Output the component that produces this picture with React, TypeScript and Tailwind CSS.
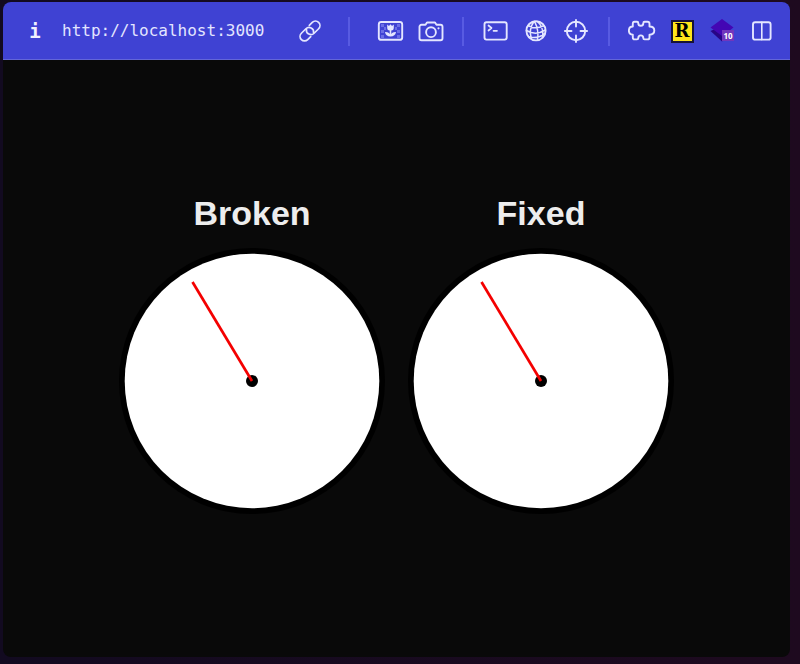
import type { ReactNode } from "react";

function Icon({ children }: { children: ReactNode }) {
  return (
    <svg
      viewBox="0 0 28 28"
      className="size-7"
      fill="none"
      stroke="#e4e6ff"
      strokeWidth="1.9"
      strokeLinecap="round"
      strokeLinejoin="round"
      aria-hidden="true"
    >
      {children}
    </svg>
  );
}

function ToolButton({ label, children }: { label: string; children: ReactNode }) {
  return (
    <button type="button" aria-label={label} className="flex w-10 shrink-0 items-center justify-center">
      <Icon>{children}</Icon>
    </button>
  );
}

function Divider({ className = "mx-3" }: { className?: string }) {
  return <span className={`h-[29px] w-0.5 shrink-0 bg-[#585be2] ${className}`} />;
}

function Toolbar() {
  return (
    <header className="flex h-[58px] items-center border-b border-[#6366d8] bg-[#3f42d3] pt-px pr-2 pl-[25px]">
      <button
        type="button"
        aria-label="Site information"
        className="flex w-[14px] shrink-0 items-center justify-center font-['DejaVu_Sans_Mono',monospace] text-[19px] leading-7 font-bold text-[#f0f1ff]"
      >
        i
      </button>
      <input
        type="text"
        aria-label="Address"
        defaultValue="http://localhost:3000"
        className="ml-5 min-w-0 flex-1 bg-transparent font-['DejaVu_Sans_Mono',monospace] text-[16px] leading-7 text-[#e4e6ff] outline-none"
      />
      <ToolButton label="Copy link">
        <g transform="rotate(-45 14 14)" strokeWidth="1.7">
          <path d="M10.500 18.500H6.300a4.500 4.500 0 0 1 0-9h6.400a4.500 4.500 0 0 1 2.600 8.200" />
          <path d="M17.500 9.500h4.200a4.500 4.500 0 0 1 0 9h-6.400a4.500 4.500 0 0 1-2.600-8.200" />
        </g>
      </ToolButton>
      <Divider className="mr-5 ml-[18px]" />
      <ToolButton label="Image">
        <rect x="2.800" y="5" width="23.400" height="17.800" rx="2.400" />
        <path
          d="M5 7h3v3H5zM8 10h2v3H8zM5 13h3v3H5zM5 18h3v3H5zM21 7h3v3h-3zM19 10h2v3h-2zM21 13h3v3h-3zM21 18h3v3h-3z"
          fill="#6b6ee6"
          stroke="none"
        />
        <path
          d="M11.200 7.500l1.800 1.500 1.500-1.800L16 9l1.800-1.500v3.700a2.500 2.500 0 0 1-2.500 2.400v3.500c.8-1.500 2.500-2.200 4.700-2-.4 3-2.400 4.400-5.500 4.400S9.400 18.100 9 15.100c2.200-.2 3.900.5 4.700 2v-3.500a2.500 2.500 0 0 1-2.500-2.400z"
          fill="#e4e6ff"
          stroke="none"
        />
      </ToolButton>
      <ToolButton label="Screenshot">
        <path d="M5.500 7.800h4l1.500-2.300h8l1.500 2.300h4a2 2 0 0 1 2 2v11.400a2 2 0 0 1-2 2h-19a2 2 0 0 1-2-2V9.800a2 2 0 0 1 2-2z" />
        <circle cx="15" cy="15.200" r="4.900" />
        <circle cx="22.500" cy="11.300" r="1.100" fill="#e4e6ff" stroke="none" />
      </ToolButton>
      <Divider />
      <ToolButton label="Console">
        <rect x="2.500" y="5.200" width="22.200" height="17.400" rx="2" />
        <path d="M6.500 8.500l3 2.500-3 2.500M11.500 13.800h3.500" strokeWidth="1.700" />
      </ToolButton>
      <ToolButton label="Network">
        <circle cx="14" cy="13.800" r="9.600" />
        <path
          d="M12 4.500C8 10 7.500 16 9.500 22M12.500 4.400C15.500 10 16.500 17 15.500 23M15.500 4.500C20 8.500 21.500 14 20.500 20.500M6 8.500c5 3 10.500 3 16 .2M4.500 13.500c6 3.600 13 3.200 18.800-.5M6.500 19.800c6 1.300 12 .3 16.300-3.200"
          strokeWidth="1.500"
        />
      </ToolButton>
      <ToolButton label="Select element">
        <circle cx="14" cy="14" r="9.200" />
        <path d="M14 2.900v6.600M14 18.500v6.600M2.900 14h6.600M18.500 14h6.600" />
      </ToolButton>
      <Divider />
      <ToolButton label="Extensions">
        <path d="M6.500 4.800H9Q10.300 4.800 10.300 6.200Q10.300 8.800 12.800 8.800Q15.300 8.800 15.300 6.200Q15.300 4.800 16.600 4.800H19.500Q21.500 4.800 21.500 6.800V9.500Q26.300 9.500 26.300 13.600Q26.300 17.700 21.500 17.700V20.400Q21.500 22.400 19.500 22.400H16.600Q15.300 22.400 15.300 21Q15.300 18.400 12.800 18.400Q10.300 18.400 10.300 21Q10.300 22.400 9 22.400H6.500Q4.800 22.400 4.800 20.400V17.700Q.900 17.700 .900 13.600Q.900 9.500 4.800 9.500V6.800Q4.800 4.800 6.500 4.800Z" />
      </ToolButton>
      <button
        type="button"
        aria-label="R extension"
        className="flex w-10 shrink-0 items-center justify-center"
      >
        <span className="flex size-[23px] items-center justify-center border-2 border-[#171238] bg-[#ffe51b] font-['DejaVu_Serif',serif] text-[18px] leading-none font-black text-black">
          R
        </span>
      </button>
      <button
        type="button"
        aria-label="Layers extension, 10 items"
        className="relative flex w-10 shrink-0 items-center justify-center"
      >
        <svg viewBox="0 0 28 28" className="size-7" aria-hidden="true">
          <path d="M2.500 14l11.500-5 11.500 5-11.500 10.500z" fill="#270485" />
          <path d="M14 2l11.500 8.500L14 19 2.500 10.500z" fill="#4306b4" />
        </svg>
        <span className="absolute right-2 bottom-1 flex h-[11px] w-3 items-center justify-center bg-[#7136bd] font-['Open_Sans',sans-serif] text-[8px] leading-none font-bold text-white">
          10
        </span>
      </button>
      <ToolButton label="Split view">
        <rect x="5" y="5.200" width="17.600" height="17.400" rx="2.200" />
        <path d="M13.800 5.200v17.400" strokeWidth="1.600" />
      </ToolButton>
    </header>
  );
}

function Clock({ title }: { title: string }) {
  return (
    <section className="flex flex-col items-center gap-[23px]">
      <h2 className="font-['Liberation_Sans',Arial,sans-serif] text-[34px] leading-6 font-bold text-[#ededed]">
        {title}
      </h2>
      <svg viewBox="0 0 266 266" className="size-[266px]" role="img" aria-label={`${title} clock`}>
        <circle cx="133" cy="133" r="133" fill="#000" />
        <circle cx="133" cy="133" r="127.300" fill="#fff" />
        <circle cx="133" cy="133" r="6" fill="#000" />
        <path d="M133 133L73.500 34" stroke="#f40000" strokeWidth="2.700" />
      </svg>
    </section>
  );
}

export default function App() {
  return (
    <div className="flex min-h-screen bg-linear-to-r from-[#120a20] to-[#1e0a1f] pt-0.5 pr-2.5 pb-[7px] pl-[3px]">
      <div className="flex flex-1 flex-col overflow-hidden rounded-lg bg-[#090909]">
        <Toolbar />
        <main className="flex flex-1 items-center justify-center gap-[23px] pb-[3px]">
          <Clock title="Broken" />
          <Clock title="Fixed" />
        </main>
      </div>
    </div>
  );
}
